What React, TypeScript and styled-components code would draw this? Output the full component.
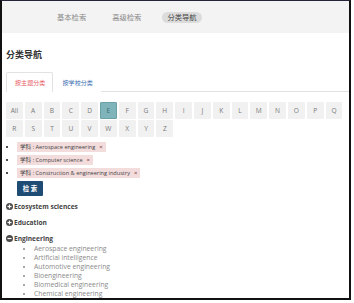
import React from "react"
import styled, { createGlobalStyle } from "styled-components"

const GlobalStyle = createGlobalStyle`
  html, body {
    margin: 0;
    padding: 0;
    background: #ffffff;
  }
  body {
    font-family: "Open Sans", "Noto Sans CJK SC", sans-serif;
  }
`

const NAV_ITEMS = ["基本检索", "高级检索", "分类导航"]
const LETTERS = [
  "All", "A", "B", "C", "D", "E", "F", "G", "H", "I", "J", "K", "L", "M", "N", "O", "P", "Q",
  "R", "S", "T", "U", "V", "W", "X", "Y", "Z",
]
const FILTERS = [
  "Aerospace engineering",
  "Computer science",
  "Construction & engineering industry",
]
const SUBJECTS = [
  "Aerospace engineering",
  "Artificial intelligence",
  "Automotive engineering",
  "Bioengineering",
  "Biomedical engineering",
  "Chemical engineering",
]

const CircleIcon = ({ open }: { open?: boolean }) => (
  <svg width="7" height="7" viewBox="0 0 14 14">
    <circle cx="7" cy="7" r="7" fill="#4a4a4a" />
    <rect x="3" y="5.8" width="8" height="2.4" fill="#fff" />
    {!open && <rect x="5.8" y="3" width="2.4" height="8" fill="#fff" />}
  </svg>
)

export default function App() {
  return (
    <>
      <GlobalStyle />
      <Frame>
        <NavBar>
          {NAV_ITEMS.map((item, i) => (
            <NavItem key={item} $active={i === 2}>
              {item}
            </NavItem>
          ))}
        </NavBar>
        <Content>
          <Heading>分类导航</Heading>
          <Tabs>
            <Tab $active>按主题分类</Tab>
            <Tab>按学校分类</Tab>
          </Tabs>
          <Letters>
            {LETTERS.map((l) => (
              <Letter key={l} $active={l === "E"}>
                {l}
              </Letter>
            ))}
          </Letters>
          <FilterList>
            {FILTERS.map((f) => (
              <FilterItem key={f}>
                <Chip>
                  学科 : {f}
                  <ChipClose>×</ChipClose>
                </Chip>
              </FilterItem>
            ))}
          </FilterList>
          <SearchButton>检 索</SearchButton>
          <Category>
            <CircleIcon />
            Ecosystem sciences
          </Category>
          <Category>
            <CircleIcon />
            Education
          </Category>
          <Category>
            <CircleIcon open />
            Engineering
          </Category>
          <SubList>
            {SUBJECTS.map((s) => (
              <SubItem key={s}>{s}</SubItem>
            ))}
          </SubList>
        </Content>
      </Frame>
    </>
  )
}

const Frame = styled.div`
  box-sizing: border-box;
  width: 351px;
  height: 300px;
  overflow: hidden;
  border-top: 1px solid #23233a;
  border-left: 2px solid #111;
  border-right: 2px solid #111;
  border-bottom: 2px solid #111;
  background: #fff;
`

const NavBar = styled.div`
  display: flex;
  align-items: center;
  gap: 16px;
  height: 32px;
  padding-left: 50px;
  background: #f3f3f3;
`

const NavItem = styled.div<{ $active?: boolean }>`
  padding: 1px 5px;
  border-radius: 6px;
  font-size: 7.3px;
  line-height: 9px;
  color: ${(p) => (p.$active ? "#444" : "#8a8a8a")};
  background: ${(p) => (p.$active ? "#dcdcdc" : "transparent")};
`

const Content = styled.div`
  padding: 15px 0 0 4px;
`

const Heading = styled.div`
  font-size: 9px;
  line-height: 14px;
  font-weight: 600;
  color: #333;
  margin-bottom: 10px;
`

const Tabs = styled.div`
  display: flex;
  border-bottom: 1px solid #e2e2e2;
  height: 19px;
`

const Tab = styled.div<{ $active?: boolean }>`
  box-sizing: border-box;
  display: flex;
  align-items: center;
  height: 20px;
  padding: 0 7px 0 8px;
  font-size: 6.1px;
  color: ${(p) => (p.$active ? "#e85a5f" : "#3a6db0")};
  background: #fff;
  border: 1px solid ${(p) => (p.$active ? "#e2e2e2" : "transparent")};
  border-bottom: none;
  border-radius: 2px 2px 0 0;
`

const Letters = styled.div`
  display: flex;
  flex-wrap: wrap;
  column-gap: 2px;
  row-gap: 1px;
  width: 345px;
  margin-top: 10px;
`

const Letter = styled.div<{ $active?: boolean }>`
  box-sizing: border-box;
  width: 16.8px;
  height: 17px;
  display: flex;
  align-items: center;
  justify-content: center;
  font-size: 6.6px;
  color: ${(p) => (p.$active ? "#3f6f75" : "#7a7a7a")};
  background: ${(p) => (p.$active ? "#7fb4ba" : "#f1f1f1")};
  border: 1px solid ${(p) => (p.$active ? "#6aa0a6" : "#f1f1f1")};
  border-radius: 1px;
`

const FilterList = styled.ul`
  list-style: disc;
  margin: 5px 0 0;
  padding-left: 11px;
  font-size: 6px;
  color: #111;
`

const FilterItem = styled.li`
  height: 13px;
`

const Chip = styled.span`
  display: inline-flex;
  align-items: center;
  height: 10px;
  padding: 0 3px;
  background: #f3dcdc;
  font-size: 5.6px;
  color: #444;
`

const ChipClose = styled.span`
  margin-left: 4px;
  font-size: 6px;
  color: #6a2a2a;
`

const SearchButton = styled.div`
  box-sizing: border-box;
  display: flex;
  align-items: center;
  justify-content: center;
  width: 26px;
  height: 15px;
  margin: 0 0 0 11px;
  border-radius: 1px;
  background: #1f4c74;
  color: #fff;
  font-size: 6.4px;
  font-weight: 700;
`

const Category = styled.div`
  display: flex;
  align-items: center;
  gap: 1px;
  margin-top: 4px;
  height: 12px;
  font-size: 6.6px;
  font-weight: 700;
  color: #444;
`

const SubList = styled.ul`
  list-style: disc;
  margin: 0;
  padding-left: 28px;
  color: #8a8a8a;
`

const SubItem = styled.li`
  font-size: 6.8px;
  line-height: 9px;
`
